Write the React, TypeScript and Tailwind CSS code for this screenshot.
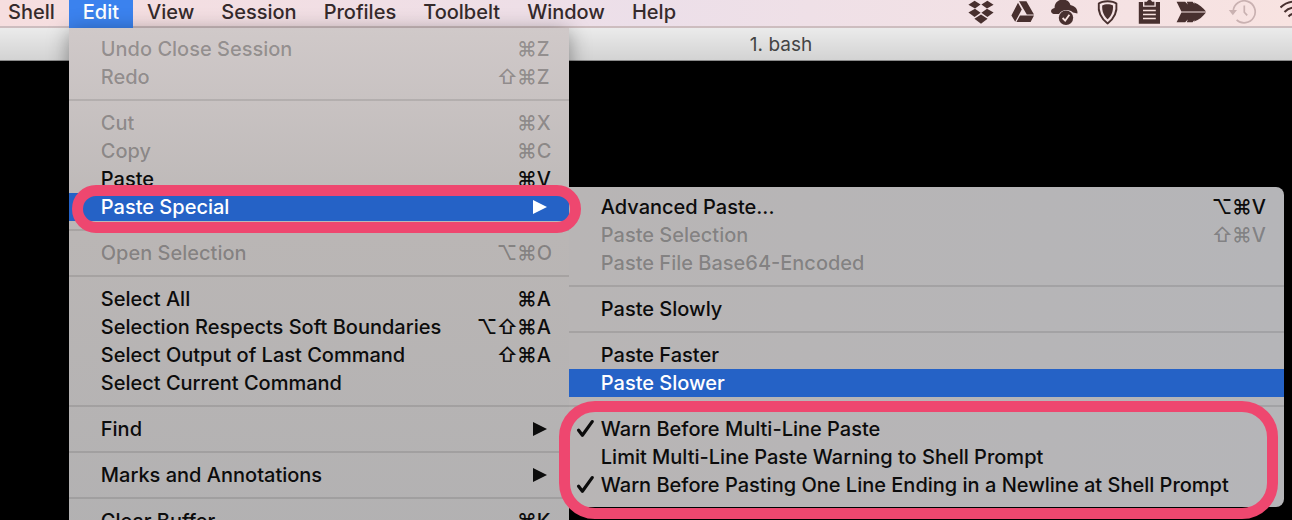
import React from "react";

type Row =
  | { kind: "sep" }
  | {
      kind?: "item";
      label: string;
      keys?: string;
      disabled?: boolean;
      active?: boolean;
      checked?: boolean;
      arrow?: boolean;
      submenu?: Row[];
    };

const submenuRows: Row[] = [
  { label: "Advanced Paste...", keys: "⌥⌘V" },
  { label: "Paste Selection", keys: "⇧⌘V", disabled: true },
  { label: "Paste File Base64-Encoded", disabled: true },
  { kind: "sep" },
  { label: "Paste Slowly" },
  { kind: "sep" },
  { label: "Paste Faster" },
  { label: "Paste Slower", active: true },
  { kind: "sep" },
  { label: "Warn Before Multi-Line Paste", checked: true },
  { label: "Limit Multi-Line Paste Warning to Shell Prompt" },
  { label: "Warn Before Pasting One Line Ending in a Newline at Shell Prompt", checked: true },
];

const editRows: Row[] = [
  { label: "Undo Close Session", keys: "⌘Z", disabled: true },
  { label: "Redo", keys: "⇧⌘Z", disabled: true },
  { kind: "sep" },
  { label: "Cut", keys: "⌘X", disabled: true },
  { label: "Copy", keys: "⌘C", disabled: true },
  { label: "Paste", keys: "⌘V" },
  { label: "Paste Special", active: true, arrow: true, submenu: submenuRows },
  { kind: "sep" },
  { label: "Open Selection", keys: "⌥⌘O", disabled: true },
  { kind: "sep" },
  { label: "Select All", keys: "⌘A" },
  { label: "Selection Respects Soft Boundaries", keys: "⌥⇧⌘A" },
  { label: "Select Output of Last Command", keys: "⇧⌘A" },
  { label: "Select Current Command" },
  { kind: "sep" },
  { label: "Find", arrow: true },
  { kind: "sep" },
  { label: "Marks and Annotations", arrow: true },
  { kind: "sep" },
  { label: "Clear Buffer", keys: "⌘K" },
];

function Shortcut({ keys }: { keys: string }) {
  return (
    <kbd className="ml-auto flex font-['Inter',sans-serif]">
      {Array.from(keys).map((k, i) => (
        <span key={i} className={i === keys.length - 1 ? "w-4 text-left" : "w-5 text-center"}>
          {k}
        </span>
      ))}
    </kbd>
  );
}

function MenuRow({ row }: { row: Row }) {
  if (row.kind === "sep") {
    return (
      <li role="separator" className="flex h-[18px] items-center">
        <span className="h-[2px] w-full bg-black/10" />
      </li>
    );
  }
  const tone = row.active
    ? "bg-[#2562c6] text-white"
    : row.disabled
      ? "text-black/30"
      : "text-[#0c0c0c]";
  return (
    <li className="relative">
      <button
        type="button"
        disabled={row.disabled}
        className={"flex h-7 w-full items-center pr-4 text-left whitespace-nowrap " + tone}
      >
        <span className="flex w-8 shrink-0 justify-center">
          {row.checked && (
            <svg width="18" height="20" viewBox="0 0 18 20" fill="none" aria-hidden="true">
              <path d="M2.6 11.2 L6.4 16.2 L16.2 2.6" stroke="currentColor" strokeWidth="3.2" strokeLinecap="round" strokeLinejoin="round" />
            </svg>
          )}
        </span>
        {row.label}
        {row.keys && <Shortcut keys={row.keys} />}
        {row.arrow && (
          <svg className="mr-1.5 ml-auto" width="14" height="14" viewBox="0 0 14 14" aria-hidden="true">
            <path d="M0 0 L14 7 L0 14Z" fill="currentColor" />
          </svg>
        )}
      </button>
      {row.submenu && (
        <>
          <ul className="absolute -top-1.5 left-full z-10 w-[715px] rounded-r-lg rounded-bl-lg bg-linear-to-r from-[#b8b5b5] to-[#b5b5b8] pt-1.5 pb-2">
            {row.submenu.map((r, i) => (
              <MenuRow key={i} row={r} />
            ))}
            <li aria-hidden="true" className="pointer-events-none absolute right-1.5 -bottom-3 -left-2.5 h-[118px] rounded-[36px] border-[11px] border-[#ee476f]" />
          </ul>
          <span className="pointer-events-none absolute -top-2 -right-3 left-[3px] z-20 h-12 rounded-full border-[11px] border-[#ee476f]" />
        </>
      )}
    </li>
  );
}

function StatusIcon({ label, dim, children }: { label: string; dim?: boolean; children: React.ReactNode }) {
  return (
    <button type="button" aria-label={label} className={dim ? "ml-[10px] text-[#c9b1b1]" : "text-[#48302f]"}>
      <svg width="30" height="27" viewBox="0 0 30 27" fill="none" aria-hidden="true">
        {children}
      </svg>
    </button>
  );
}

function StatusIcons() {
  return (
    <div className="ml-auto flex shrink-0 gap-3">
      <StatusIcon label="Dropbox">
        <path fill="currentColor" d="M8.6 0.8 L14.6 4.6 L9 8.4 L2.4 4.8Z M21.4 0.8 L27.6 4.8 L21 8.4 L15.4 4.6Z M9 8.8 L14.6 12.8 L8.6 17 L2.4 12.6Z M21 8.8 L27.6 12.6 L21.4 17 L15.4 12.8Z M15 14.4 L21.6 18.8 L15 23.8 L8.4 18.8Z" />
      </StatusIcon>
      <StatusIcon label="Google Drive">
        <path fill="currentColor" d="M11 1.2 H18.4 L26 14.4 H18.8Z M10 2.8 L13.8 9.4 L7.2 21.8 L3.4 15.4Z M12 15.6 H26 L22.6 22 H8.4Z" />
      </StatusIcon>
      <StatusIcon label="Cloud sync">
        <path fill="currentColor" d="M3.6 14 C-0.4 12.6 0.6 8.6 4.6 8 C4.4 3.4 7.6 -0.4 12.7 -0.4 C17.4 -0.4 19.8 2.2 20.4 5 C24.8 6 28 9 27.4 13.4 L23 12.6 C20.4 9.4 12.2 8.4 9 14Z" />
        <circle cx="16" cy="17.8" r="7.2" fill="currentColor" />
        <path d="M12.6 18 L15.2 20.6 L19.4 14.8" stroke="#f9e3e0" strokeWidth="1.8" />
      </StatusIcon>
      <StatusIcon label="Shield">
        <path d="M15.6 1.2 C19 1.2 22.4 2 24.4 3.6 C25.4 12 22 18.6 15.6 23.4 C9.2 18.6 5.8 12 6.8 3.6 C8.8 2 12.2 1.2 15.6 1.2Z" stroke="currentColor" strokeWidth="1.9" />
        <path fill="currentColor" d="M15.6 4.2 C17.6 4.2 19.6 4.6 21 5.4 C21.4 11 19.4 15.8 15.6 19.2 C11.8 15.8 9.8 11 10.2 5.4 C11.6 4.6 13.6 4.2 15.6 4.2Z" />
      </StatusIcon>
      <StatusIcon label="Clipboard">
        <path fill="currentColor" d="M4.8 2 H9 V6.8 H21.8 V2 H26 V23.8 H4.8Z M10.4 1.8 H13 C13.2 -0.6 17.8 -0.6 18 1.8 H20.4 V5.4 H10.4Z" />
        <path d="M9 10.4 H21.8 M9 14.5 H21.8 M9 18.6 H21.8" stroke="#f9e3e0" strokeWidth="1.5" />
      </StatusIcon>
      <StatusIcon label="Arrow">
        <path fill="currentColor" d="M0.6 1.8 H9.2 L11.8 4.6 L10.8 1.8 H16.6 L18.6 4.2 L18 2.4 C23 4 27 7.6 30 11.5 H5.4Z M0.6 22.2 H9.2 L11.8 19.4 L10.8 22.2 H16.6 L18.6 19.8 L18 21.6 C23 20 27 16.4 30 12.5 H5.4Z" />
      </StatusIcon>
      <StatusIcon label="Time Machine" dim>
        <path d="M5.2 11 A11 11 0 1 1 8.6 19.8 M16.3 5.5 V12.2 L19.2 15.4" stroke="currentColor" strokeWidth="1.7" />
        <path fill="currentColor" d="M0.8 10 H9 L4.8 15.2Z" />
      </StatusIcon>
      <button type="button" aria-label="Wi-Fi" className="ml-[10px] w-3 overflow-hidden text-[#48302f]">
        <svg width="30" height="27" viewBox="0 0 30 27" fill="none" stroke="currentColor" strokeWidth="2" aria-hidden="true">
          <path d="M0.5 7.5 C8 -0.5 22 -0.5 29.5 7.5 M4.5 12 C10 6 20 6 25.5 12 M8.5 16.5 C12 12.6 18 12.6 21.5 16.5" />
        </svg>
      </button>
    </div>
  );
}

export default function App() {
  return (
    <div className="flex h-screen flex-col overflow-hidden bg-black font-['Inter',sans-serif] text-[20px] leading-7 font-medium">
      <nav className="relative z-10 flex h-7 shrink-0 border-b-2 border-[#cdbdbf] bg-linear-to-r from-[#f6dedf] via-[#ecdfe9] via-50% to-[#f8e3e1] text-[#352a2b]">
        <button type="button" className="h-6 pr-3.5 pl-2 leading-6">Shell</button>
        <div className="relative flex">
          <button type="button" className="h-7 bg-[#3b82ee] px-3.5 pb-1 leading-6 text-white">Edit</button>
          <ul className="absolute top-7 left-0 w-[500px] bg-linear-to-b from-[#d0c9c9] via-[#bab6b5] via-40% to-[#b2b1b2] pt-[7px] pb-2 shadow-[0_4px_20px_rgba(0,0,0,0.4)]">
            {editRows.map((r, i) => (
              <MenuRow key={i} row={r} />
            ))}
          </ul>
        </div>
        {["View", "Session", "Profiles", "Toolbelt", "Window", "Help"].map((name) => (
          <button key={name} type="button" className="h-6 pr-[13px] pl-3.5 leading-6">
            {name}
          </button>
        ))}
        <StatusIcons />
      </nav>
      <header className="flex h-[33px] shrink-0 items-center justify-center border-b border-[#8a8a8a] bg-linear-to-b from-[#ebebeb] to-[#d3d3d3] pl-[270px]">
        <h1 className="pt-0.5 text-[19px] font-normal text-[#444]">1. bash</h1>
      </header>
      <main className="flex-1 bg-black" />
    </div>
  );
}
